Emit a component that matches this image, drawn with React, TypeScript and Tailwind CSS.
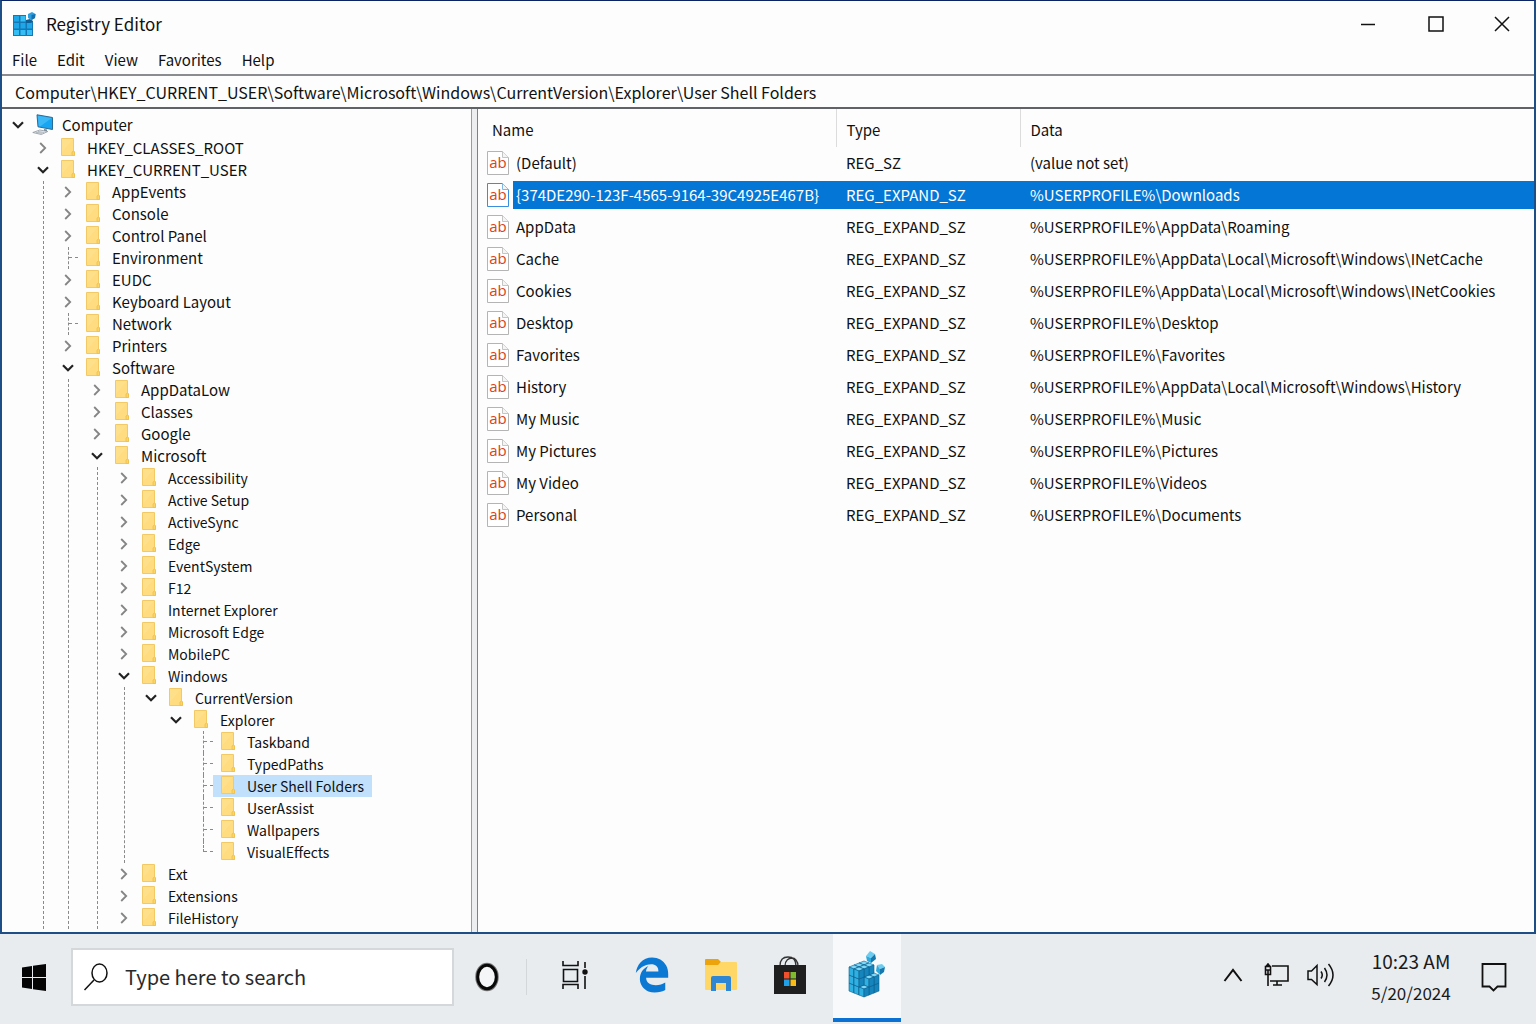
import React from "react";
import { FaEdgeLegacy } from "react-icons/fa";

type TreeNode = {
  name: string;
  leaf?: boolean;
  guide?: boolean;
  selected?: boolean;
  children?: TreeNode[];
};

const closed = (...names: string[]): TreeNode[] => names.map((name) => ({ name }));
const leaves = (...names: string[]): TreeNode[] => names.map((name) => ({ name, leaf: true }));

const explorerKeys: TreeNode[] = [
  ...leaves("Taskband", "TypedPaths"),
  { name: "User Shell Folders", leaf: true, selected: true },
  ...leaves("UserAssist", "Wallpapers", "VisualEffects"),
];

const microsoftKeys: TreeNode[] = [
  ...closed(
    "Accessibility",
    "Active Setup",
    "ActiveSync",
    "Edge",
    "EventSystem",
    "F12",
    "Internet Explorer",
    "Microsoft Edge",
    "MobilePC",
  ),
  {
    name: "Windows",
    guide: true,
    children: [{ name: "CurrentVersion", children: [{ name: "Explorer", children: explorerKeys }] }],
  },
  ...closed("Ext", "Extensions", "FileHistory"),
];

const currentUserKeys: TreeNode[] = [
  ...closed("AppEvents", "Console", "Control Panel"),
  ...leaves("Environment"),
  ...closed("EUDC", "Keyboard Layout"),
  ...leaves("Network"),
  ...closed("Printers"),
  {
    name: "Software",
    guide: true,
    children: [
      ...closed("AppDataLow", "Classes", "Google"),
      { name: "Microsoft", guide: true, children: microsoftKeys },
    ],
  },
];

const root: TreeNode = {
  name: "Computer",
  children: [
    { name: "HKEY_CLASSES_ROOT" },
    { name: "HKEY_CURRENT_USER", guide: true, children: currentUserKeys },
  ],
};

const values: { name: string; type: string; data: string; selected?: boolean }[] = [
  { name: "(Default)", type: "REG_SZ", data: "(value not set)" },
  {
    name: "{374DE290-123F-4565-9164-39C4925E467B}",
    type: "REG_EXPAND_SZ",
    data: "%USERPROFILE%\\Downloads",
    selected: true,
  },
  { name: "AppData", type: "REG_EXPAND_SZ", data: "%USERPROFILE%\\AppData\\Roaming" },
  { name: "Cache", type: "REG_EXPAND_SZ", data: "%USERPROFILE%\\AppData\\Local\\Microsoft\\Windows\\INetCache" },
  { name: "Cookies", type: "REG_EXPAND_SZ", data: "%USERPROFILE%\\AppData\\Local\\Microsoft\\Windows\\INetCookies" },
  { name: "Desktop", type: "REG_EXPAND_SZ", data: "%USERPROFILE%\\Desktop" },
  { name: "Favorites", type: "REG_EXPAND_SZ", data: "%USERPROFILE%\\Favorites" },
  { name: "History", type: "REG_EXPAND_SZ", data: "%USERPROFILE%\\AppData\\Local\\Microsoft\\Windows\\History" },
  { name: "My Music", type: "REG_EXPAND_SZ", data: "%USERPROFILE%\\Music" },
  { name: "My Pictures", type: "REG_EXPAND_SZ", data: "%USERPROFILE%\\Pictures" },
  { name: "My Video", type: "REG_EXPAND_SZ", data: "%USERPROFILE%\\Videos" },
  { name: "Personal", type: "REG_EXPAND_SZ", data: "%USERPROFILE%\\Documents" },
];

// Padding between a parent's guide line and its children's toggles, by parent depth.
const childPadding = ["pl-[14px]", "pl-[14px]", "pl-[18px]", "pl-[16px]", "pl-[16px]", "pl-[14px]", "pl-[16px]"];

function FolderIcon() {
  return (
    <svg width="14" height="18" viewBox="0 0 14 18" aria-hidden="true">
      <path d="M.5.5h12v12.5l1 1v3.500H.5z" fill="#ffe08a" stroke="#f3c965" />
      <path d="M1 14 12 1v12l-1 4H1z" fill="#ffd978" opacity=".6" />
      <path d="M11 17.500v-3.500l1.500-1 1 1v3.500z" fill="#fbd567" stroke="#efbf4d" strokeWidth=".8" />
    </svg>
  );
}

function ComputerIcon() {
  return (
    <svg width="22" height="22" viewBox="0 0 22 22" aria-hidden="true">
      <path d="m5 .8 15.500 2.700v12L6 12.800z" fill="#18a5f2" stroke="#2c6a96" strokeWidth="1" />
      <path d="m5.800 1.700 14 2.400L8 12.500l-1.300-.4z" fill="#4cc0fa" opacity=".7" />
      <path d="m12 15 3 .5v2l-3-.5z" fill="#7c8a96" />
      <path d="m.8 18.500 7-2.500 8 1.500-6.500 3z" fill="#e9edf0" stroke="#8d979f" strokeWidth=".8" />
      <path d="m4 18.300 6 1M6 17.500l6 1" stroke="#9aa4ab" strokeWidth=".7" />
    </svg>
  );
}

function Toggle({ open }: { open: boolean }) {
  return open ? (
    <svg width="12" height="8" viewBox="0 0 12 8" fill="none" aria-hidden="true">
      <path d="m1 1.200 5 5 5-5" stroke="#222" strokeWidth="2.200" />
    </svg>
  ) : (
    <svg width="8" height="12" viewBox="0 0 8 12" fill="none" aria-hidden="true">
      <path d="m1.200 1 5 5-5 5" stroke="#858585" strokeWidth="1.800" />
    </svg>
  );
}

function LeafConnector({ last }: { last: boolean }) {
  return (
    <span className="flex h-full w-5 flex-none pl-[10px]" aria-hidden="true">
      <span className={`w-px border-l border-dashed border-[#8a8a8a] ${last ? "h-1/2" : "h-full"}`} />
      <span className="h-1/2 w-[9px] flex-none border-b border-dashed border-[#8a8a8a]" />
    </span>
  );
}

function TreeItem({ node, depth, last }: { node: TreeNode; depth: number; last: boolean }) {
  const open = Boolean(node.children);
  return (
    <li role="treeitem" aria-expanded={node.leaf ? undefined : open} aria-selected={Boolean(node.selected)}>
      <div className={`flex items-center ${depth === 0 ? "h-6" : "h-[22px]"} ${depth > 3 ? "text-[14px]" : "text-[15px]"}`}>
        {node.leaf ? (
          <LeafConnector last={last} />
        ) : (
          <button type="button" aria-label={`Toggle ${node.name}`} className="flex h-full w-5 flex-none items-center justify-center">
            <Toggle open={open} />
          </button>
        )}
        <button
          type="button"
          className={`flex h-full items-center whitespace-nowrap pr-2 ${node.selected ? "bg-[#c0e0fc]" : ""}`}
        >
          <span className="mr-1 flex h-full w-[30px] flex-none justify-center pt-px">
            {depth === 0 ? <ComputerIcon /> : <FolderIcon />}
          </span>
          {node.name}
        </button>
      </div>
      {node.children && (
        <ul
          role="group"
          className={`ml-[10px] border-l border-dashed ${node.guide ? "border-[#8a8a8a]" : "border-transparent"} ${childPadding[depth]}`}
        >
          {node.children.map((child, i) => (
            <TreeItem key={child.name} node={child} depth={depth + 1} last={i === node.children!.length - 1} />
          ))}
        </ul>
      )}
    </li>
  );
}

function StringValueIcon({ selected }: { selected?: boolean }) {
  return (
    <svg width="22" height="24" viewBox="0 0 22 24" className="flex-none" aria-hidden="true">
      <path d="M.5.5h15l6 6v17H.5z" fill="#fff" stroke={selected ? "#3a8fdc" : "#b4b4b4"} />
      <path d="M15.500.5v6h6" fill="#f4f4f4" stroke={selected ? "#7fb6e6" : "#c4c4c4"} />
      <text x="11" y="17" textAnchor="middle" fontSize="15" fill="#d9431c" className="font-['Open_Sans','Noto_Sans',sans-serif]">
        ab
      </text>
    </svg>
  );
}

function TitleIcon() {
  return (
    <svg width="24" height="26" viewBox="0 0 24 26" aria-hidden="true">
      <path d="M1 4h13v6h7v15H1z" fill="#1378b5" />
      <path d="M2 5h5v5.500H2zM2 12h5v5.500H2zM8.500 12h5v5.500h-5zM15 12h5v5.500h-5z" fill="#1da6e8" />
      <path d="M8.500 5h5v5.500h-5zM2 19h5v5H2zM8.500 19h5v5h-5zM15 19h5v5h-5z" fill="#35bdf5" />
      <path d="m14 9 4-1 3 2-3 2h-4z" fill="#0d5f96" />
      <path d="m16 3 4-2 3.500 2-.5 4-3.500 2L16 7z" fill="#2d9fdf" />
      <path d="m19.500 4 4-1-.5 4-3.500 2z" fill="#176fae" />
    </svg>
  );
}

const isRemoved = (x: number, y: number, z: number) => (x === 2 && z === 2) || (x === 2 && y === 2 && z === 1);

const cubes = [0, 1, 2].flatMap((z) =>
  [0, 1, 2].flatMap((y) => [0, 1, 2].filter((x) => !isRemoved(x, y, z)).map((x) => ({ x, y, z }))),
);

function RegistryCubeIcon() {
  return (
    <svg width="38" height="48" viewBox="0 0 38 48" strokeLinejoin="round" strokeWidth=".6" stroke="#0c5f8e" aria-hidden="true">
      {cubes.map(({ x, y, z }) => {
        const px = 16 + 5 * (x - y);
        const py = 11 + 2 * (x + y) + 8 * (2 - z);
        return (
          <g key={`${x}${y}${z}`}>
            <path d={`M${px} ${py}l5 2-5 2-5-2z`} fill="#7fd8f7" />
            <path d={`M${px - 5} ${py + 2}l5 2v8l-5-2z`} fill="#2fb0e2" />
            <path d={`M${px + 5} ${py + 2}l-5 2v8l5-2z`} fill="#1685bd" />
          </g>
        );
      })}
      <path d="m22 1 5 3-4 4-5-2z" fill="#6ccdf2" stroke="none" />
      <path d="m18 6 5 2v5l-4-2z" fill="#2fa9dc" stroke="none" />
      <path d="m27 4 1 5-5 4V8z" fill="#1579ae" stroke="none" />
      <path d="m29 15 5-1 3 3-5 2z" fill="#6ccdf2" stroke="none" />
      <path d="m29 15 3 4v6l-4-4z" fill="#2fa9dc" stroke="none" />
      <path d="m37 17-1 5-4 3v-6z" fill="#1579ae" stroke="none" />
    </svg>
  );
}

function FileExplorerIcon() {
  return (
    <svg width="34" height="34" viewBox="0 0 34 34" aria-hidden="true">
      <path d="M1 2a1 1 0 0 1 1-1h12l3 3-3 4H1z" fill="#eda30c" />
      <path d="M1 7h13l3-3h15a1 1 0 0 1 1 1v26a1 1 0 0 1-1 1H2a1 1 0 0 1-1-1z" fill="#ffd767" />
      <path d="M7 20a2 2 0 0 1 2-2h16a2 2 0 0 1 2 2v13h-5v-8H12v8H7z" fill="#2f86d2" />
    </svg>
  );
}

function StoreIcon() {
  return (
    <svg width="34" height="40" viewBox="0 0 34 40" aria-hidden="true">
      <path d="M7 11C7 4 11 2 15 2s8 2 8 9M12 11c0-6 4-8 7-8s6 3 6 8" fill="none" stroke="#333" strokeWidth="1.300" />
      <path d="M1 10h32v29H1z" fill="#1f1f1f" />
      <path d="M11 17h5.500v6.500H11z" fill="#f1502f" />
      <path d="M17.500 17H23v6.500h-5.500z" fill="#7fbb2c" />
      <path d="M11 24.500h5.500V31H11z" fill="#20a0e8" />
      <path d="M17.500 24.500H23V31h-5.500z" fill="#fbbc17" />
    </svg>
  );
}

function TaskbarButton({ label, className, children }: { label: string; className: string; children: React.ReactNode }) {
  return (
    <button type="button" aria-label={label} className={`flex flex-none items-center justify-center ${className}`}>
      {children}
    </button>
  );
}

function Taskbar() {
  return (
    <footer className="flex h-[90px] flex-none items-stretch bg-[#e8ecef] pb-1 pr-2 text-[#1a1a1a]">
      <TaskbarButton label="Start" className="w-[71px] pr-1">
        <svg width="26" height="29" viewBox="0 0 26 29" fill="#050505" aria-hidden="true">
          <path d="m1 4.500 10-1.500v11H1zM12 2.800 25 1v13H12zM1 15h10v11L1 24.500zM12 15h13v13l-13-1.800z" />
        </svg>
      </TaskbarButton>
      <div role="search" className="my-3.5 flex w-[383px] items-center border-2 border-[#d5d8da] bg-white pl-[10px]">
        <svg width="26" height="30" viewBox="0 0 26 30" fill="none" stroke="#111" strokeWidth="1.500" className="flex-none" aria-hidden="true">
          <ellipse cx="16.500" cy="11" rx="7.500" ry="9" />
          <path d="M11 18 1.500 28" />
        </svg>
        <input
          type="search"
          aria-label="Search"
          placeholder="Type here to search"
          className="ml-4 min-w-0 flex-1 bg-transparent text-[20px] leading-8 outline-none placeholder:text-[#2a2a2a]"
        />
      </div>
      <TaskbarButton label="Cortana" className="w-[66px]">
        <svg width="26" height="30" viewBox="0 0 26 30" fill="none" aria-hidden="true">
          <ellipse cx="13" cy="15" rx="9.500" ry="12" stroke="#777" strokeWidth="4.500" />
          <ellipse cx="13" cy="15" rx="9.300" ry="11.700" fill="#f4f6f7" stroke="#080808" strokeWidth="3" />
        </svg>
      </TaskbarButton>
      <span className="mx-1.5 h-9 w-px self-center bg-[#d3d7da]" />
      <TaskbarButton label="Task View" className="w-[84px] pb-1">
        <svg width="26" height="28" viewBox="0 0 26 28" fill="none" stroke="#111" strokeWidth="1.600" aria-hidden="true">
          <path d="M1 0v4.500h15V0M1.500 8.500h14v12h-14zM1 28v-4.500h15V28M23 1v6M23 15v13" />
          <circle cx="23" cy="11" r="2.700" fill="#111" stroke="none" />
        </svg>
      </TaskbarButton>
      <TaskbarButton label="Microsoft Edge" className="w-[69px] pb-1">
        <FaEdgeLegacy className="size-[36px] text-[#0b78d4]" />
      </TaskbarButton>
      <TaskbarButton label="File Explorer" className="w-[69px] pb-1">
        <FileExplorerIcon />
      </TaskbarButton>
      <TaskbarButton label="Microsoft Store" className="w-[69px] pb-1">
        <StoreIcon />
      </TaskbarButton>
      <TaskbarButton label="Registry Editor" className="-mb-0.5 ml-[9px] w-[68px] border-b-4 border-[#0b72d3] bg-[#f7f9fb] pb-1">
        <RegistryCubeIcon />
      </TaskbarButton>
      <div className="ml-auto flex">
        <TaskbarButton label="Show hidden icons" className="w-11 pb-1">
          <svg width="20" height="14" viewBox="0 0 20 14" fill="none" stroke="#111" strokeWidth="2" aria-hidden="true">
            <path d="m1.500 13 8.500-11 8.500 11" />
          </svg>
        </TaskbarButton>
        <TaskbarButton label="Network" className="w-11 pb-1">
          <svg width="26" height="24" viewBox="0 0 26 24" fill="none" stroke="#111" strokeWidth="1.600" aria-hidden="true">
            <path d="M8 3h16v15H6M13 18v4M9 22h9M4 12v11M1.500 3.500h5v8h-5zM2 3.500 4 1l2 2.500M2 7h5M4 7v4" />
          </svg>
        </TaskbarButton>
        <TaskbarButton label="Volume" className="w-11 pb-1">
          <svg width="28" height="26" viewBox="0 0 28 26" fill="none" stroke="#111" strokeWidth="1.500" aria-hidden="true">
            <path d="M1 9h3.500L10 3.500v19L4.500 17.500H1zM14 9.500q2.500 3.500 0 7M17.500 6q5 7 0 14M21.500 2q9 11 0 22" />
          </svg>
        </TaskbarButton>
        <button type="button" className="ml-5 flex w-24 flex-col items-center justify-center whitespace-nowrap text-[19px] leading-8">
          <time>10:23 AM</time>
          <time className="text-[17px]">5/20/2024</time>
        </button>
        <TaskbarButton label="Notifications" className="w-[69px]">
          <svg width="26" height="30" viewBox="0 0 26 30" fill="none" stroke="#111" strokeWidth="1.800" aria-hidden="true">
            <path d="M1.500 2h23v22.500h-8l-4 4-4-4h-7z" />
          </svg>
        </TaskbarButton>
      </div>
    </footer>
  );
}

export default function App() {
  return (
    <div className="flex min-h-screen flex-col bg-[#e8ecef] font-['Noto_Sans_CJK_SC','Open_Sans',sans-serif] text-[15px] text-[#111]">
      <main className="flex flex-1 flex-col border-x-2 border-b-2 border-t border-x-[#1d4f86] border-b-[#1d4f86] border-t-[#0b2464] bg-[#fdfdfd]">
        <header className="flex h-[45px] items-center pl-[10px]">
          <TitleIcon />
          <h1 className="ml-[10px] text-[17px] leading-6">Registry Editor</h1>
          <div className="ml-auto flex self-stretch">
            <button type="button" aria-label="Minimize" className="flex w-[68px] items-center justify-center">
              <svg width="16" height="16" viewBox="0 0 16 16" aria-hidden="true">
                <path d="M1 8.500h14" stroke="#111" strokeWidth="1.500" />
              </svg>
            </button>
            <button type="button" aria-label="Maximize" className="flex w-[68px] items-center justify-center">
              <svg width="16" height="16" viewBox="0 0 16 16" fill="none" aria-hidden="true">
                <path d="M1 1h14v14H1z" stroke="#111" strokeWidth="1.500" />
              </svg>
            </button>
            <button type="button" aria-label="Close" className="flex w-16 items-center justify-center">
              <svg width="16" height="16" viewBox="0 0 16 16" aria-hidden="true">
                <path d="m1 1 14 14M15 1 1 15" stroke="#111" strokeWidth="1.500" />
              </svg>
            </button>
          </div>
        </header>
        <nav className="flex h-[28px] items-center gap-5 pl-[10px] leading-6">
          <button type="button">File</button>
          <button type="button">Edit</button>
          <button type="button">View</button>
          <button type="button">Favorites</button>
          <button type="button">Help</button>
        </nav>
        <div className="flex h-[33px] items-center border-t-2 border-[#8a8c8f]">
          <input
            aria-label="Registry path"
            className="h-full w-full bg-transparent pl-[13px] text-[16px] leading-6 outline-none"
            defaultValue="Computer\HKEY_CURRENT_USER\Software\Microsoft\Windows\CurrentVersion\Explorer\User Shell Folders"
          />
        </div>
        <div className="flex flex-1 border-t-2 border-[#5f6368]">
          <ul role="tree" aria-label="Registry keys" className="w-[470px] flex-none overflow-hidden border-r border-[#9a9da0] pl-[6px] pt-1">
            <TreeItem node={root} depth={0} last />
          </ul>
          <div className="w-[6px] flex-none border-r border-[#7e8285] bg-[#eceef0]" />
          <section className="min-w-0 flex-1" aria-label="Values">
            <table className="w-full table-fixed text-left">
              <colgroup>
                <col className="w-[358px]" />
                <col className="w-[184px]" />
                <col />
              </colgroup>
              <thead>
                <tr className="h-[38px]">
                  <th className="border-r border-[#dcdcdc] pl-[14px] pt-1 font-normal">Name</th>
                  <th className="border-r border-[#dcdcdc] pl-[10px] pt-1 font-normal">Type</th>
                  <th className="pl-[10px] pt-1 font-normal">Data</th>
                </tr>
              </thead>
              <tbody>
                {values.map((value) => {
                  const tone = value.selected ? "bg-[#0476d6] text-white" : "";
                  return (
                    <tr key={value.name} className="h-8 whitespace-nowrap">
                      <td className="p-0">
                        <div className="flex h-7 items-center pl-[9px]">
                          <StringValueIcon selected={value.selected} />
                          <span className={`ml-1 flex-1 pl-[3px] leading-7 ${tone}`}>{value.name}</span>
                        </div>
                      </td>
                      <td className="p-0">
                        <div className={`h-7 pl-[10px] leading-7 ${tone}`}>{value.type}</div>
                      </td>
                      <td className="p-0">
                        <div className={`h-7 pl-[10px] leading-7 ${tone}`}>{value.data}</div>
                      </td>
                    </tr>
                  );
                })}
              </tbody>
            </table>
          </section>
        </div>
      </main>
      <Taskbar />
    </div>
  );
}
